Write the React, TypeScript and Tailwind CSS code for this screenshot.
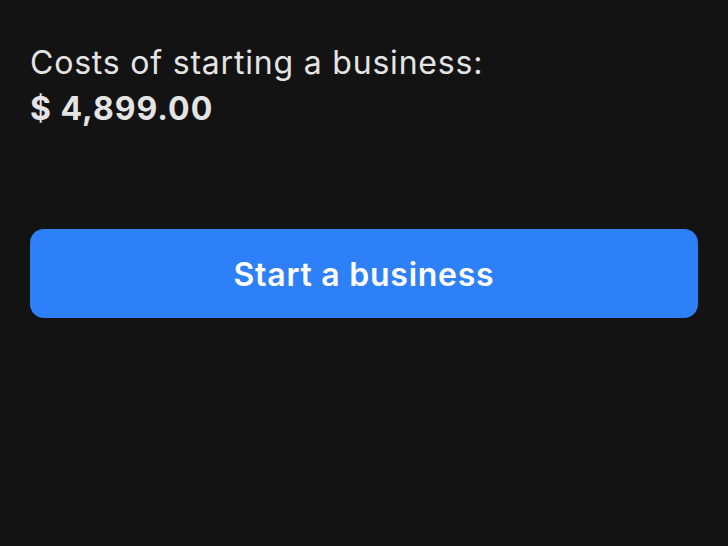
import React from 'react';

const App: React.FC = () => {
  return (
    <div
      className="w-[728px] h-[546px] bg-[#131313] px-[30px] pt-[39px]"
      style={{ fontFamily: 'Inter, "Noto Sans", sans-serif' }}
    >
      {/* Cost summary */}
      <p className="text-[32px] leading-[47px] tracking-[0.8px] text-[#e4e4e4]">Costs of starting a business:</p>
      <p className="mt-[3px] text-[32px] leading-[40px] tracking-[1px] font-bold text-[#e4e4e4]">$ 4,899.00</p>

      {/* Action */}
      <button className="mt-[100px] w-full h-[89px] rounded-[14px] bg-[#2e80f8] text-white text-[32px] tracking-[0.75px] font-semibold pt-[2px]">
        Start a business
      </button>
    </div>
  );
};

export default App;
